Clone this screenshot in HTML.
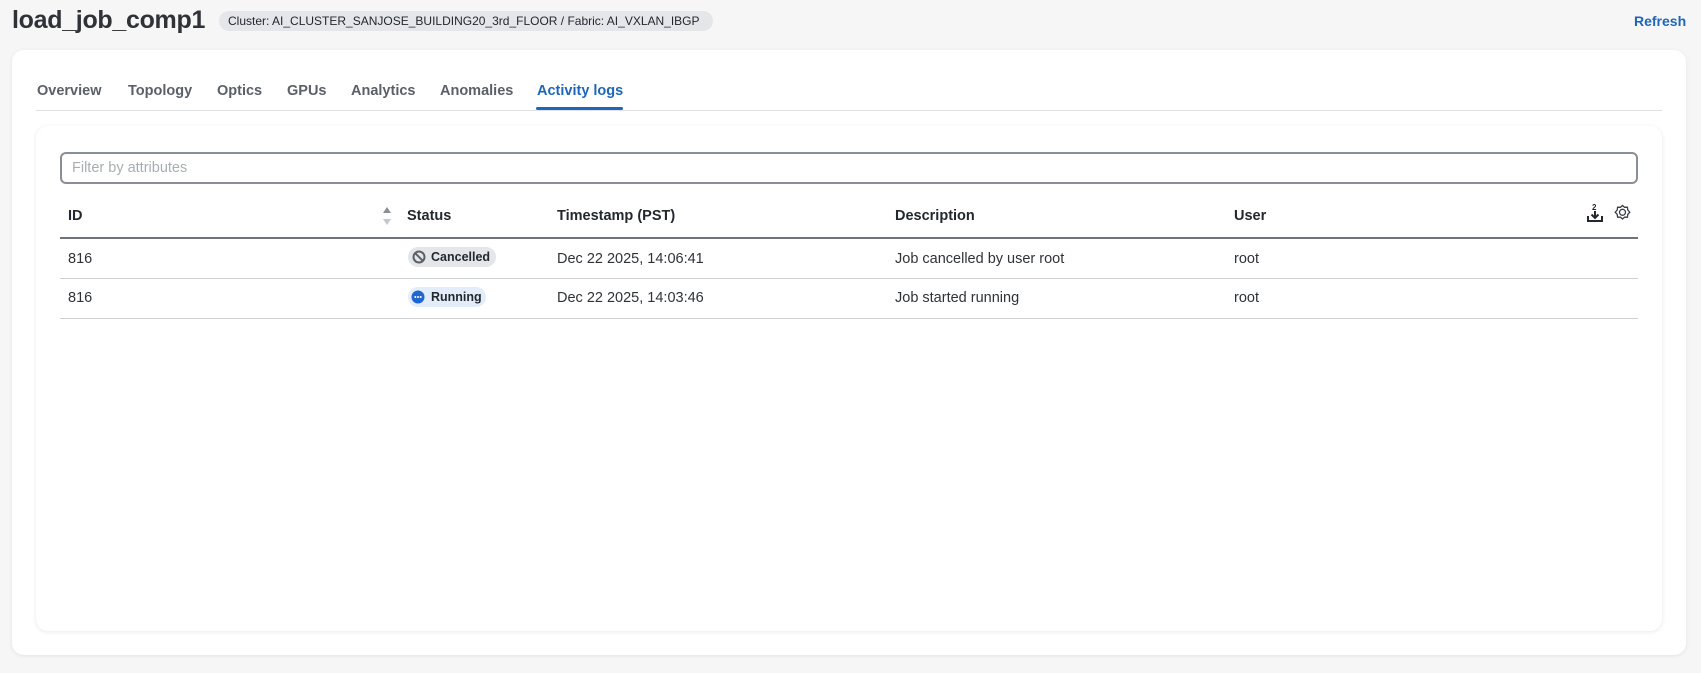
<!DOCTYPE html>
<html><head><meta charset="utf-8"><style>
*{box-sizing:border-box;margin:0;padding:0}
body{width:1701px;height:673px;background:#f6f6f6;font-family:"Liberation Sans",Arial,sans-serif;color:#23282e;position:relative;overflow:hidden}
.abs{position:absolute}
.title{left:12px;top:6px;font-size:25px;font-weight:bold;color:#2f3237;letter-spacing:-0.3px}
.badge{left:219px;top:11px;height:20px;width:494px;border-radius:10px;background:#e4e6ea;font-size:12px;line-height:20px;padding-left:9px;color:#23282e}
.refresh{left:1634px;top:13px;font-size:14px;font-weight:bold;color:#1f66b8}
.outer{left:12px;top:50px;width:1674px;height:605px;background:#fff;border-radius:12px;box-shadow:0 1px 4px rgba(0,0,0,.08)}
.tab{top:83px;font-size:14.5px;font-weight:bold;color:#5b6068}
.tab.act{color:#1f66b8}
.tabline{left:36px;top:110px;width:1626px;height:1px;background:#dfe1e4}
.uline{left:536px;top:107px;width:87px;height:3px;background:#1f66b8;border-radius:2px}
.inner{left:36px;top:126px;width:1626px;height:505px;background:#fff;border-radius:12px;box-shadow:0 1px 5px rgba(0,0,0,.09)}
.input{left:60px;top:152px;width:1578px;height:32px;border:2px solid #8a8f95;border-radius:6px;font-size:14.5px;color:#a9adb2;padding:6px 0 0 10px}
.th{top:208px;font-size:14.5px;font-weight:bold;color:#23282e}
.td{font-size:14.5px;color:#2f3237}
.hl{left:60px;top:237px;width:1578px;height:2px;background:#6f747a}
.rl{left:60px;width:1578px;height:1px;background:#cdd0d4}
.pill{left:408px;height:20px;border-radius:10px;font-size:12.5px;font-weight:bold;line-height:20px;padding-left:23px;color:#23282e}
</style></head><body>
<div class="abs title">load_job_comp1</div>
<div class="abs badge">Cluster: AI_CLUSTER_SANJOSE_BUILDING20_3rd_FLOOR / Fabric: AI_VXLAN_IBGP</div>
<div class="abs refresh">Refresh</div>
<div class="abs outer"></div>
<div class="abs tab" style="left:37px">Overview</div>
<div class="abs tab" style="left:128px">Topology</div>
<div class="abs tab" style="left:217px">Optics</div>
<div class="abs tab" style="left:287px">GPUs</div>
<div class="abs tab" style="left:351px">Analytics</div>
<div class="abs tab" style="left:440px">Anomalies</div>
<div class="abs tab act" style="left:537px">Activity logs</div>
<div class="abs tabline"></div>
<div class="abs uline"></div>
<div class="abs inner"></div>
<div class="abs input">Filter by attributes</div>
<div class="abs th" style="left:68px">ID</div>
<svg class="abs" style="left:382px;top:206px" width="10" height="20"><path d="M5 1 L9 7 H1Z" fill="#8a8f95"/><path d="M5 19 L9 13 H1Z" fill="#c4c7cb"/></svg>
<div class="abs th" style="left:407px">Status</div>
<div class="abs th" style="left:557px">Timestamp (PST)</div>
<div class="abs th" style="left:895px">Description</div>
<div class="abs th" style="left:1234px">User</div>
<svg class="abs" style="left:1586px;top:203px" width="18" height="20" fill="none" stroke="#23282e" stroke-width="2"><text x="6" y="7" font-size="8" font-weight="bold" fill="#23282e" stroke="none" font-family="Liberation Sans">2</text><path d="M9 8 V15 M5.5 11.5 L9 15 L12.5 11.5"/><path d="M2 13 V18 H16 V13"/></svg>
<svg class="abs" style="left:1614px;top:204px" width="17" height="17" fill="none" stroke="#3a3f45" stroke-width="1.3"><path d="M8.5 1.5 L10.6 3.3 L13.4 3.2 L13.8 6 L15.8 8.2 L13.8 10.4 L13.4 13.2 L10.6 13.1 L8.5 15 L6.4 13.1 L3.6 13.2 L3.2 10.4 L1.2 8.2 L3.2 6 L3.6 3.2 L6.4 3.3Z"/><circle cx="8.5" cy="8.3" r="3"/></svg>
<div class="abs hl"></div>
<div class="abs td" style="left:68px;top:251px">816</div>
<div class="abs pill" style="top:247px;width:88px;background:#e4e6ea">Cancelled</div>
<svg class="abs" style="left:412px;top:250px" width="14" height="14" fill="none" stroke="#5b6068" stroke-width="2"><circle cx="7" cy="7" r="5.5"/><path d="M3.2 3.2 L10.8 10.8"/></svg>
<div class="abs td" style="left:557px;top:251px">Dec 22 2025, 14:06:41</div>
<div class="abs td" style="left:895px;top:251px">Job cancelled by user root</div>
<div class="abs td" style="left:1234px;top:251px">root</div>
<div class="abs rl" style="top:278px"></div>
<div class="abs td" style="left:68px;top:290px">816</div>
<div class="abs pill" style="top:287px;width:78px;background:#e3edfa">Running</div>
<svg class="abs" style="left:411px;top:290px" width="14" height="14"><circle cx="7" cy="7" r="6.5" fill="#1f66d0"/><circle cx="4.3" cy="7" r="1" fill="#fff"/><circle cx="7" cy="7" r="1" fill="#fff"/><circle cx="9.7" cy="7" r="1" fill="#fff"/></svg>
<div class="abs td" style="left:557px;top:290px">Dec 22 2025, 14:03:46</div>
<div class="abs td" style="left:895px;top:290px">Job started running</div>
<div class="abs td" style="left:1234px;top:290px">root</div>
<div class="abs rl" style="top:318px"></div>
</body></html>
